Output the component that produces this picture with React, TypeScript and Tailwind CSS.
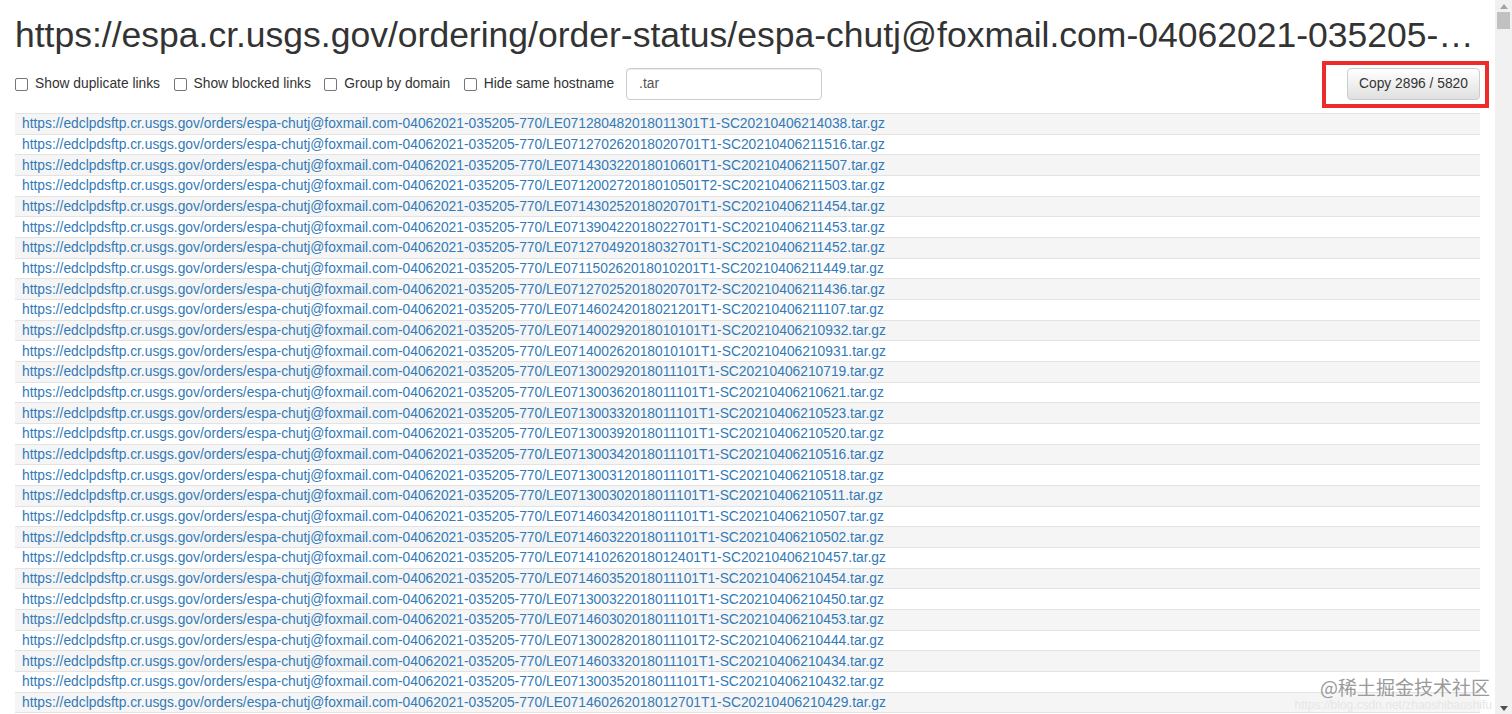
import React from "react";

const ids = [
  "LE071280482018011301T1-SC20210406214038",
  "LE071270262018020701T1-SC20210406211516",
  "LE071430322018010601T1-SC20210406211507",
  "LE071200272018010501T2-SC20210406211503",
  "LE071430252018020701T1-SC20210406211454",
  "LE071390422018022701T1-SC20210406211453",
  "LE071270492018032701T1-SC20210406211452",
  "LE071150262018010201T1-SC20210406211449",
  "LE071270252018020701T2-SC20210406211436",
  "LE071460242018021201T1-SC20210406211107",
  "LE071400292018010101T1-SC20210406210932",
  "LE071400262018010101T1-SC20210406210931",
  "LE071300292018011101T1-SC20210406210719",
  "LE071300362018011101T1-SC20210406210621",
  "LE071300332018011101T1-SC20210406210523",
  "LE071300392018011101T1-SC20210406210520",
  "LE071300342018011101T1-SC20210406210516",
  "LE071300312018011101T1-SC20210406210518",
  "LE071300302018011101T1-SC20210406210511",
  "LE071460342018011101T1-SC20210406210507",
  "LE071460322018011101T1-SC20210406210502",
  "LE071410262018012401T1-SC20210406210457",
  "LE071460352018011101T1-SC20210406210454",
  "LE071300322018011101T1-SC20210406210450",
  "LE071460302018011101T1-SC20210406210453",
  "LE071300282018011101T2-SC20210406210444",
  "LE071460332018011101T1-SC20210406210434",
  "LE071300352018011101T1-SC20210406210432",
  "LE071460262018012701T1-SC20210406210429",
  "LE071460272018012701T1-SC20210406210428",
];

const base =
  "https://edclpdsftp.cr.usgs.gov/orders/espa-chutj@foxmail.com-04062021-035205-770/";

function Check({ label }: { label: string }) {
  return (
    <label className="flex items-center gap-[7px] text-[13.8px] text-[#333]">
      <span className="w-[13px] h-[13px] border border-[#767676] rounded-[2px] bg-white shrink-0" />
      <span>{label}</span>
    </label>
  );
}

export default function App() {
  return (
    <div
      className="flex h-[714px] w-[1512px] overflow-hidden bg-white relative"
      style={{ fontFamily: '"Liberation Sans", Arial, sans-serif' }}
    >
      <div className="flex-1 min-w-0 px-[15px] flex flex-col">
        <h1 className="shrink-0 pt-[16px] text-[35.5px] leading-[39px] h-[55px] text-[#333] whitespace-nowrap overflow-hidden text-ellipsis pr-[4px]">
          https://espa.cr.usgs.gov/ordering/order-status/espa-chutj@foxmail.com-04062021-035205-770
        </h1>
        <div className="shrink-0 flex items-center mt-[13px] h-[32px]">
          <div className="flex items-center gap-[13.5px]">
            <Check label="Show duplicate links" />
            <Check label="Show blocked links" />
            <Check label="Group by domain" />
            <Check label="Hide same hostname" />
          </div>
          <div className="ml-[12px] w-[196px] h-[32px] border border-[#ccc] rounded-[4px] px-[12px] flex items-center text-[13.8px] text-[#555] shadow-[inset_0_1px_1px_rgba(0,0,0,0.075)]">
            .tar
          </div>
          <div className="ml-auto relative">
            <div className="h-[32px] w-[133px] justify-center flex items-center border border-[#ccc] rounded-[4px] text-[13.8px] text-[#333] bg-gradient-to-b from-white to-[#e0e0e0]">
              Copy 2896 / 5820
            </div>
            <div className="absolute left-[-25px] right-[-9px] top-[-7px] bottom-[-8px] border-[4px] border-[#ee2b2b]" />
          </div>
        </div>
        <div className="shrink-0 mt-[13px] flex flex-col">
          {ids.map((id, i) => (
            <div
              key={i}
              className={`h-[20.68px] shrink-0 border-t border-[#e3e3e3] pl-[7px] flex items-center text-[13.8px] leading-[19px] ${
                i % 2 === 0 ? "bg-[#f5f5f5]" : "bg-white"
              }`}
            >
              <span className="text-[#337ab7] whitespace-nowrap">
                {base}
                {id}.tar.gz
              </span>
            </div>
          ))}
        </div>
      </div>
      <div className="w-[17px] shrink-0 bg-[#f1f1f1] flex flex-col items-center">
        <div className="h-[12px] flex items-center justify-center">
          <svg width="8" height="5" viewBox="0 0 8 5">
            <path d="M0 5 L4 0 L8 5 Z" fill="#a3a3a3" />
          </svg>
        </div>
        <div className="w-[13px] h-[17px] bg-[#c1c1c1]" />
        <div className="flex-1" />
        <div className="h-[12px] flex items-center justify-center">
          <svg width="8" height="5" viewBox="0 0 8 5">
            <path d="M0 0 L4 5 L8 0 Z" fill="#505050" />
          </svg>
        </div>
      </div>
      <div
        className="absolute right-[22px] bottom-[18px] text-[19px] text-[#9a9a9a] leading-none"
        style={{ fontFamily: '"Noto Sans CJK SC", sans-serif' }}
      >
        @稀土掘金技术社区
      </div>
      <div className="absolute right-[20px] bottom-[3px] text-[12px] text-[#e6e6e6] leading-none">
        https://blog.csdn.net/zhaoshibaoshifu
      </div>
    </div>
  );
}
